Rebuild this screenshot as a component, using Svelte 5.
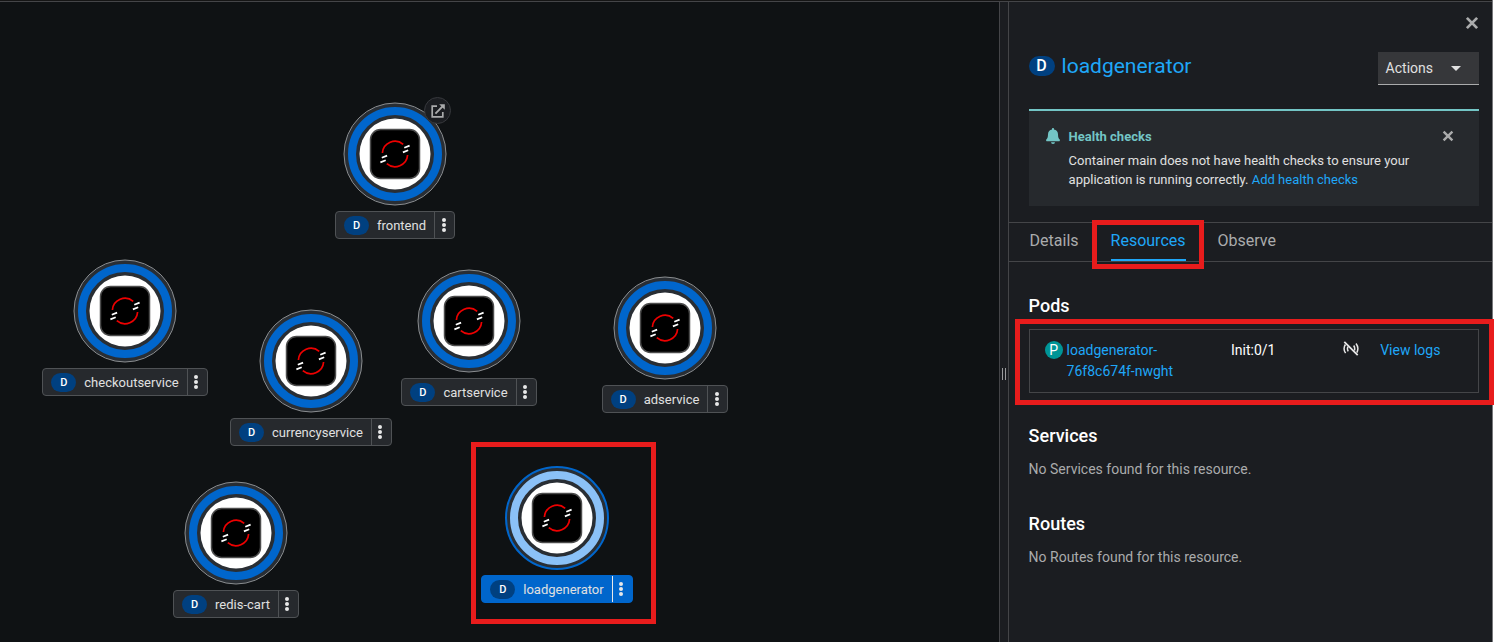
<script>
  const nodes = [
    { name: 'frontend', x: 395, y: 154, external: true },
    { name: 'checkoutservice', x: 125, y: 311 },
    { name: 'currencyservice', x: 311, y: 361 },
    { name: 'cartservice', x: 469, y: 321 },
    { name: 'adservice', x: 665, y: 328 },
    { name: 'redis-cart', x: 236, y: 533 },
    { name: 'loadgenerator', x: 557, y: 518, selected: true },
  ];
  const tabs = ['Details', 'Resources', 'Observe'];
  let active = $state('Resources');
</script>

{#snippet cross(size)}
  <svg width={size} height={size} viewBox="0 0 12 12" aria-hidden="true">
    <path d="M1.6 1.6 10.4 10.4M10.4 1.6 1.6 10.4" fill="none" stroke="currentColor" stroke-width="2.4" />
  </svg>
{/snippet}

<div class="page">
  <main class="canvas">
    {#each nodes as node}
      <div class="node" class:selected={node.selected} style="left:{node.x}px;top:{node.y}px">
        <svg class="disc" width="104" height="104" viewBox="-52 -52 104 104" role="img" aria-label={node.name}>
          <circle class="outer" r="51" />
          <circle class="ring" r="43" />
          <circle r="35.5" fill="#fff" />
          <rect x="-24.5" y="-24.5" width="49" height="49" rx="10" fill="#000" stroke="#4c4c4c" stroke-width="1.5" />
          <g fill="none" stroke="#e00" stroke-width="1.7">
            <path d="M-12.6 -1A12.6 12.6 0 0 1 8.2 -9.6" />
            <path d="M12.6 1A12.6 12.6 0 0 1 -8.2 9.6" />
          </g>
          <g stroke="#fff" stroke-width="1.7">
            <path d="M9.3 -6.2 14.6 -8.4M7.9 -1.6 13.2 -3.8M-13.2 3.8 -7.9 1.6M-14.6 8.4 -9.3 6.2" />
          </g>
        </svg>
        {#if node.external}
          <a class="open" href="#open" aria-label="Open URL">
            <svg width="14" height="14" viewBox="0 0 14 14" aria-hidden="true">
              <path d="M6 2.2H1.2V12.8H11.8V8" fill="none" stroke="currentColor" stroke-width="1.7" />
              <path d="M4.4 9.6 11.6 2.4" fill="none" stroke="currentColor" stroke-width="2" />
              <path d="M8.2 .2H13.8V5.8Z" fill="currentColor" />
            </svg>
          </a>
        {/if}
        <div class="label">
          <span class="kind">D</span>
          <span class="name">{node.name}</span>
          <button class="kebab" aria-label="{node.name} actions">
            <svg width="4" height="14" viewBox="0 0 4 14" fill="currentColor" aria-hidden="true">
              <circle cx="2" cy="2" r="2" /><circle cx="2" cy="7" r="2" /><circle cx="2" cy="12" r="2" />
            </svg>
          </button>
        </div>
        {#if node.selected}<div class="mark mark-node"></div>{/if}
      </div>
    {/each}
  </main>

  <div class="splitter" role="separator" aria-orientation="vertical"><span></span></div>

  <aside class="panel">
    <div class="top"><button class="icon-btn" aria-label="Close">{@render cross(14)}</button></div>
    <header>
      <h1><span class="kind big">D</span><a href="#loadgenerator">loadgenerator</a></h1>
      <button class="actions">Actions
        <svg width="10" height="5" viewBox="0 0 10 5" aria-hidden="true"><path d="M0 0H10L5 5Z" fill="currentColor" /></svg>
      </button>
    </header>

    <section class="alert">
      <svg class="bell" width="14" height="16" viewBox="0 0 14 16" fill="currentColor" aria-hidden="true">
        <path d="M7 0C7.6 0 8 .4 8 1V1.6C10.3 2 12 3.9 12 6.3C12 9.4 12.7 10.5 13.7 11.6C14.2 12.2 13.8 13.2 13 13.2H1C.2 13.2 -.2 12.2 .3 11.6C1.3 10.5 2 9.4 2 6.3C2 3.9 3.7 2 6 1.6V1C6 .4 6.4 0 7 0ZM5 14.2H9A2 1.8 0 0 1 5 14.2Z" />
      </svg>
      <div class="alert-text">
        <h2>Health checks</h2>
        <p>Container main does not have health checks to ensure your application is running correctly. <a href="#add">Add health checks</a></p>
      </div>
      <button class="icon-btn" aria-label="Dismiss">{@render cross(12)}</button>
    </section>

    <div class="tabs" role="tablist">
      {#each tabs as tab}
        <button role="tab" aria-selected={active === tab} onclick={() => (active = tab)}>
          <span>{tab}</span>
          {#if tab === 'Resources'}<i class="mark mark-tab"></i>{/if}
        </button>
      {/each}
    </div>

    <div class="body">
      <h3>Pods</h3>
      <ul class="pods">
        <li>
          <div class="pod"><span class="pod-kind">P</span><a href="#pod">loadgenerator-76f8c674f-nwght</a></div>
          <span>Init:0/1</span>
          <svg width="16" height="16" viewBox="0 0 16 16" fill="none" stroke="#e8e8e8" role="img" aria-label="Not receiving traffic">
            <path d="M1.3 .8 14.7 14.2" stroke-width="1.8" />
            <path d="M2.4 3.5C.8 6 .8 9.5 2.6 12.2M5 5.6C4.2 7.2 4.3 8.8 5.2 10.4M13 2.5C15.2 5.4 15.3 8.8 13.8 11.6M10.7 4.5C11.8 6.2 12 7.8 11.4 9.4" stroke-width="1.5" />
          </svg>
          <a href="#logs">View logs</a>
          <div class="mark mark-pods"></div>
        </li>
      </ul>
      <h3>Services</h3>
      <p>No Services found for this resource.</p>
      <h3>Routes</h3>
      <p>No Routes found for this resource.</p>
    </div>
  </aside>
</div>

<style>
  :global(body) { background: #fff; }
  .page, .page * { box-sizing: border-box; }
  .page {
    display: flex;
    min-height: 100vh;
    margin-right: 2px;
    padding-top: 1px;
    background: #151515;
    border-right: 1px solid #77787b;
    font-family: Roboto, "Noto Sans", sans-serif;
    font-size: 14px;
    line-height: 21px;
    color: #fff;
  }
  h1, h2, h3, p, ul { margin: 0; padding: 0; }
  button { font: inherit; color: inherit; background: none; border: 0; padding: 0; cursor: pointer; }
  a { color: #1fa7f8; text-decoration: none; }
  svg { display: block; flex: none; }

  .canvas { position: relative; flex: 1; min-width: 0; overflow: hidden; background: #0f1214; border-top: 1px solid #444548; }
  .node { position: absolute; width: 200px; margin: -54px 0 0 -100px; display: flex; flex-direction: column; align-items: center; gap: 5px; }
  .outer { fill: #292e34; stroke: #8a8d90; stroke-width: 1; }
  .ring { fill: none; stroke: #06c; stroke-width: 8; }
  .selected .outer { stroke: #06c; stroke-width: 2; }
  .selected .ring { stroke: #8bc1f7; }
  .open {
    position: absolute; left: 129px; top: -5px; width: 27px; height: 27px;
    display: flex; align-items: center; justify-content: center;
    border: 1px solid #37393d; border-radius: 50%; background: #1b1d21; color: #aaabac;
  }
  .label {
    display: flex; align-items: center; height: 28px; padding-left: 8px;
    border: 1px solid #4f5255; border-radius: 4px; background: #26292d;
    font-size: 13px; color: #e0e0e0; white-space: nowrap;
  }
  .kind {
    display: flex; align-items: center; justify-content: center; width: 25px; height: 19px;
    border-radius: 10px; background: #004080; color: #fff; font-size: 11px; font-weight: 500;
  }
  .name { padding: 0 8px; }
  .kebab { display: flex; align-items: center; justify-content: center; align-self: stretch; width: 20px; padding-right: 2px; border-left: 1px solid #4f5255; color: #e8e8e8; }
  .selected .label { background: #06c; border-color: #06c; }
  .selected .kebab { border-color: #e8e8e8; }

  .mark { position: absolute; border: 5px solid #e81c1c; pointer-events: none; }
  .mark-node { inset: -24px 1px -21px 14px; }
  .mark-tab { inset: -3px -18px -8px -19px; z-index: 1; }
  .mark-pods { inset: -11px -16px -14px -15px; }

  .splitter { display: flex; align-items: center; justify-content: center; width: 10px; padding-top: 104px; background: #1b1d21; border: 1px solid #444548; border-bottom: 0; }
  .splitter span { width: 4px; height: 12px; border: solid #9a9b9d; border-width: 0 1px; }

  .panel { width: 32.4%; min-width: 420px; background: #1b1d21; border-top: 1px solid #444548; }
  .top { display: flex; justify-content: flex-end; padding: 13px 12px 0; }
  .icon-btn { display: flex; align-items: center; justify-content: center; width: 16px; height: 16px; color: #aaabac; }
  header { display: flex; justify-content: space-between; align-items: center; padding: 21px 13px 0 20px; }
  h1 { display: flex; align-items: center; gap: 7px; margin-bottom: 5px; font-size: 21px; line-height: 28px; font-weight: 400; }
  .big { width: 26px; height: 20px; font-size: 16px; }
  .actions { display: flex; align-items: center; gap: 18px; height: 33px; padding: 0 18px 0 8px; background: #36373a; border-bottom: 1px solid #aaabac; color: #e0e0e0; }

  .alert { display: flex; margin: 24px 13px 16px 20px; padding: 17px 23px 17px 17px; border-top: 2px solid #73c5c5; background: #26292d; font-size: 13px; line-height: 19px; color: #e0e0e0; }
  .bell { margin-right: 9px; color: #73c5c5; }
  .alert-text { flex: 1; padding-right: 16px; }
  h2 { margin-bottom: 5px; font-size: 13px; line-height: 18px; font-weight: 700; color: #73c5c5; }

  .tabs { display: flex; gap: 32px; padding: 0 21px; border: solid #444548; border-width: 1px 0; }
  .tabs button { position: relative; height: 38px; font-size: 16px; color: #aaabac; }
  .tabs span { display: flex; align-items: center; height: 100%; padding-bottom: 2px; border-bottom: 2px solid transparent; }
  .tabs button[aria-selected='true'] { color: #1fa7f8; }
  .tabs button[aria-selected='true'] span { border-color: #1fa7f8; }

  .body { padding: 32px 13px 16px 20px; }
  h3 { font-size: 18px; line-height: 24px; font-weight: 500; }
  .body p { margin: 10px 0 32px; line-height: 22px; color: #aaabac; }
  .pods { margin: 11px 0 31px; list-style: none; border: 1px solid #444548; }
  .pods li { position: relative; display: grid; grid-template-columns: 45fr 27fr 9fr 20fr; align-items: start; padding: 10px 15px; }
  .mark-pods { inset: -11px -16px -13px -15px; }
  .pods svg { margin-top: 1px; }
  .pod { display: flex; gap: 4px; padding-right: 12px; }
  .pod-kind { display: flex; align-items: center; justify-content: center; flex: none; width: 18px; height: 18px; margin-top: 1px; border-radius: 50%; background: #009596; }
</style>
